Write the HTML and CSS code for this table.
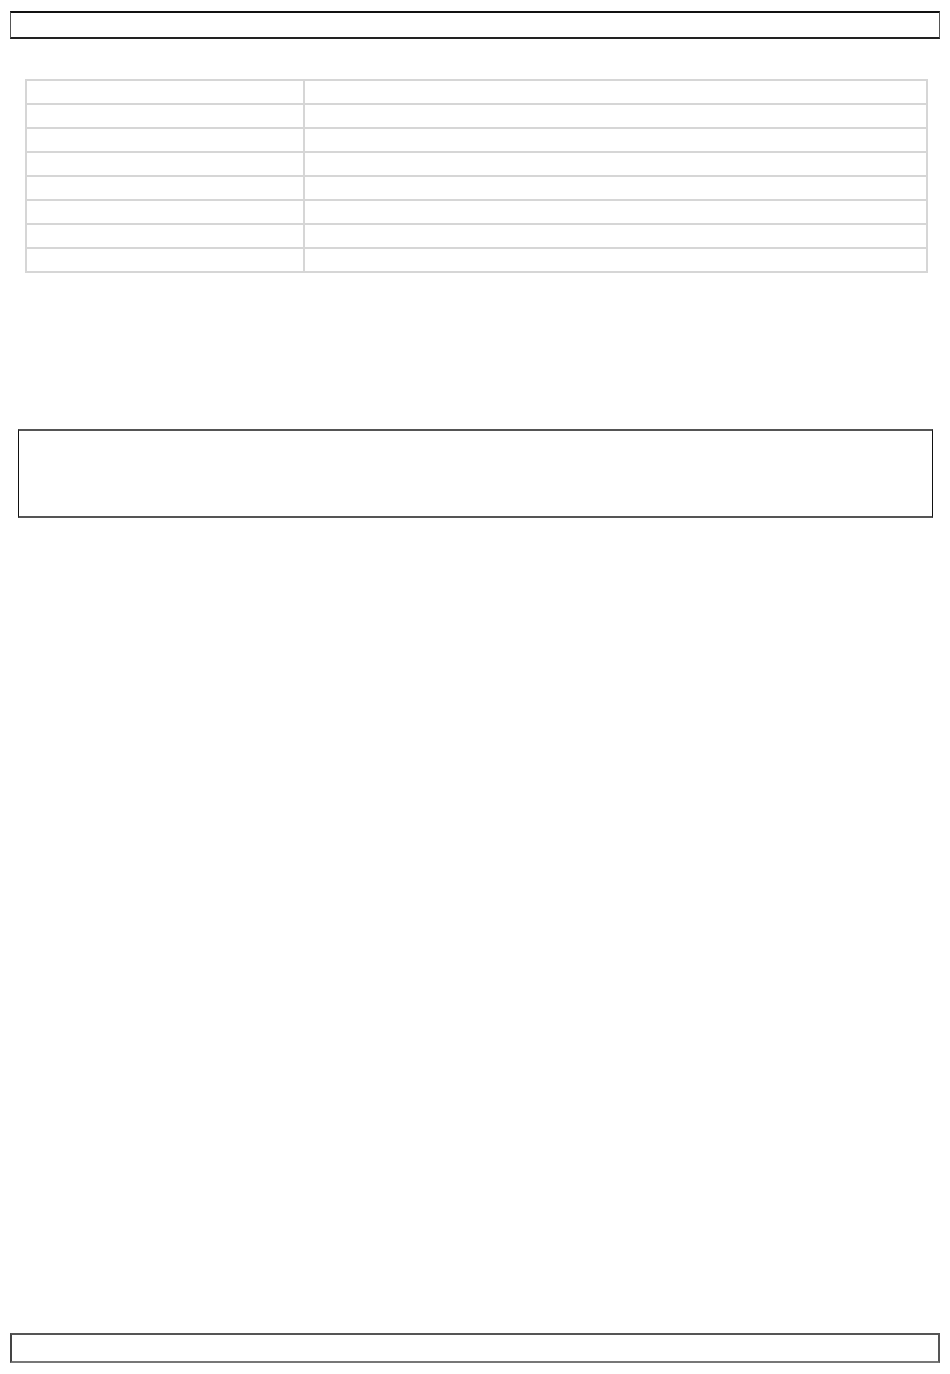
FILE: index.html
```html
<!DOCTYPE html>
<html lang="en">
<head>
  <meta charset="UTF-8"/>
  <title>Details</title>
  <link rel="stylesheet" href="styles.css">
</head>
<body>

<!-- header bar -->
<header class="bar top"></header>

<!-- details table -->
<table class="grid">
  <tr><td class="k"></td><td></td></tr>
  <tr><td class="k"></td><td></td></tr>
  <tr><td class="k"></td><td></td></tr>
  <tr><td class="k"></td><td></td></tr>
  <tr><td class="k"></td><td></td></tr>
  <tr><td class="k"></td><td></td></tr>
  <tr><td class="k"></td><td></td></tr>
  <tr><td class="k"></td><td></td></tr>
</table>

<!-- notes box -->
<section class="note"></section>

<!-- footer bar -->
<footer class="bar bottom"></footer>

</body>
</html>
```

FILE: styles.css
```css
*{box-sizing:border-box;font-family:"Liberation Sans",Arial,sans-serif}
html,body{margin:0;height:100%}
body{display:flex;flex-direction:column;min-height:1374px;background:#fff;padding:11px 0}
.bar{margin:0 10px;height:28px;border-style:solid;border-width:2px 1px;border-color:#111 #555 #222 #555}
.bar.bottom{margin-top:auto;height:30px;border-width:2px;border-color:#555 #555 #777 #444}
.grid{margin:40px 22px 0 25px;width:903px;border-collapse:collapse;border:2px solid #d6d6d6}
.grid td{height:24px;border:2px solid #d6d6d6;padding:0}
.grid td.k{width:278px}
.note{margin:156px 17px 0 18px;height:89px;border-style:solid;border-width:2px 1px;border-color:#555 #111 #555 #111}
```
